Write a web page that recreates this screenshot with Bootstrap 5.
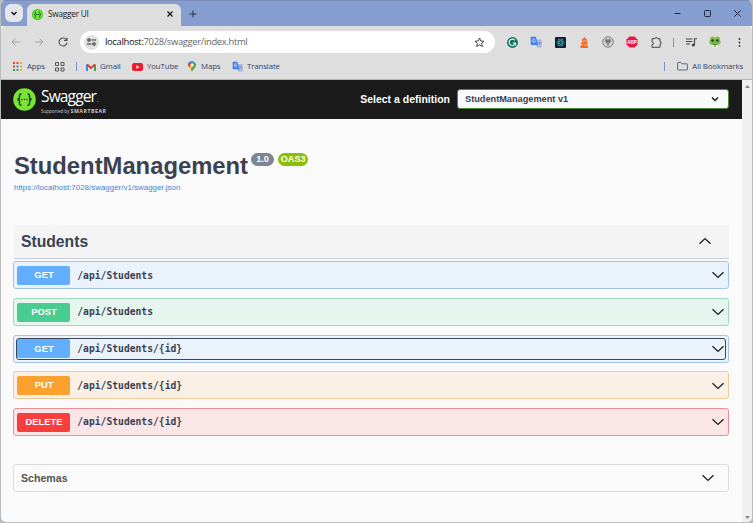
<!DOCTYPE html>
<html lang="en">
<head>
<meta charset="utf-8">
<meta name="viewport" content="width=device-width, initial-scale=1">
<title>Swagger UI</title>
<link href="https://cdn.jsdelivr.net/npm/bootstrap@5.3.0/dist/css/bootstrap.min.css" rel="stylesheet">
<style>
body{width:753px;height:523px;overflow:hidden;background:#b9bbbc;font-family:"Liberation Sans",Arial,sans-serif;line-height:1}
svg{display:block;flex:none;overflow:visible}
.window{height:522px;margin:0 1px;background:#fafafa;border-radius:5px;overflow:hidden}
.ui-text{font-family:"Open Sans","Noto Sans",sans-serif;white-space:nowrap}
.titlebar{height:26px;background:#859ecf;border-top:1px solid #7d8fb9}
.tab-menu{width:18px;height:18px;margin:3px 4px 4px 4px;border-radius:6px;background:#e4e6ea}
.browser-tab{width:154px;height:23px;margin-top:3px;padding:0 8px 3px 5px;border-radius:6px 6px 0 0;background:#dedede;font-size:8.3px;letter-spacing:-.25px;color:#222}
.tab-name{margin-left:5px}
.new-tab{padding-left:8px}
.caption{width:30px}
.toolbar{height:31px;padding:1px 0 0 2px;background:#dedede;border-radius:4px 4px 0 0}
.slot{width:24px;display:flex;justify-content:center;flex:none}
.address{width:415px;height:22px;border-radius:11px;background:#fff;padding:0 10px 0 4px;font-size:9.4px;letter-spacing:-.32px;color:#666;margin:0 5px 0 5px;flex:none}
.address b{font-weight:400;color:#111}
.url{margin-left:6px}
.site{width:15px;height:15px;border-radius:50%;background:#e1e1e1;flex:none}
.rule{width:1px;height:9px;background:#7b93c5;flex:none}
.side-gap{margin:0 5px}
.bookmarks{height:23px;background:#dedede;border-bottom:1px solid #b5b5b5;font-size:7.8px;letter-spacing:-.1px;color:#34416b;padding:0 9px 3px 12px}
.bm{display:flex;align-items:center;flex:none}
.bm-apps{width:42px;gap:5px}
.bm-grid{width:21px}
.bm-gmail{width:46px;gap:4px;margin-left:9px}
.bm-yt{width:56px;gap:4px}
.bm-maps{width:44px;gap:5px}
.page{width:741px}
.topbar{height:39px;background:#1b1b1b;color:#fff;padding:0 13px 1px 12px}
.logo-words{padding:4px 0 0 1px}
.brand{font-size:15.6px;letter-spacing:-.9px;line-height:15px}
.brand i{font-size:6px;letter-spacing:0;font-style:normal;margin-left:1px}
.support{font-size:4.6px;line-height:5px;color:#ccc;letter-spacing:-.05px;margin-top:1px}
.support b{font-size:5.2px;letter-spacing:.55px}
.def-label{font-size:10.5px;margin-right:7px}
.def-select{width:272px;height:20px;border:1px solid #4f8a32;border-radius:3px;background:#f7f9fb;color:#3b4151;font-size:9.2px;padding:0 9px 0 7px;line-height:12px}
.main{padding:0 13px 0 12px}
.info{padding:33px 0 0 1px;height:106px}
.info h1{font-size:23.8px;line-height:28px;color:#3b4151;margin:0 3px 0 0}
.ver{height:13px;border-radius:7px;background:#7d8492;color:#fff;font-size:9.1px;margin-top:1px;padding:0 5.2px}
.ver.oas{background:#89bf04;margin-left:4px;padding:0 2.7px}
.spec{font-size:7.95px;line-height:9px;color:#4685d5;text-decoration:none;margin-top:3px}
.tag-head{height:34px;background:#f4f4f4;border-bottom:1px solid #c9ced9;padding:0 17px 0 7px;margin:0 0 2.200px 1px;color:#3b4151;font-size:15.7px}
.tag-head svg{margin-bottom:1px}
.op{height:28px;margin-bottom:8.7px;border:1px solid var(--c);border-radius:3px;background:var(--bg);padding:3.300px 3px 0 3px}
.op-in{height:20px;border-radius:2px}
.op.focused .op-in{outline:1px solid #3b4658}
.verb{width:53px;height:19px;border-radius:2px;background:var(--m);color:#fff;font-size:9.4px;padding:0 0 1px 1px}
.route{font-family:"DejaVu Sans Mono",monospace;font-size:9.68px;margin-left:7.3px;color:#3b4151}
.get{--c:#a3c4e9;--bg:#eaf2fc;--m:#61affe}
.post{--c:#9fd9bd;--bg:#e6f6ee;--m:#49cc90}
.put{--c:#efca97;--bg:#fbf0e5;--m:#fca130}
.delete{--c:#ec8f98;--bg:#fae6e7;--m:#f93e3e}
.schemas{height:28px;margin:28.500px 0 0 0;border:1px solid #dcdcdc;border-radius:3px;padding:0 13px 0 7px;font-size:10.6px;color:#555}
.scroll{width:10px;background:#f0f0f0;padding:5px 0 3px}
</style>
<script src="https://cdn.jsdelivr.net/npm/bootstrap@5.3.0/dist/js/bootstrap.bundle.min.js"></script>
</head>
<body>
<svg width="0" height="0" class="position-absolute"><defs>
<symbol id="down" viewBox="0 0 14 10"><path d="M1.500 2.200 7 7.400l5.500-5.200" fill="none" stroke="#222" stroke-width="1.400"/></symbol>
<symbol id="translate" viewBox="0 0 12 12"><path d="M6 4h4.500q.7 0 .7.700v5.600q0 .7-.7.700H7.200z" fill="#b9c6e6" stroke="#7892c7" stroke-width=".6"/><path d="M1.500.7h4.300l2.400 8.300H1.500q-.8 0-.8-.8V1.500q0-.8.8-.8z" fill="#3f7ff0"/><path d="M5.200 3.700A1.500 1.500 0 1 0 5.300 5.300H4.200" fill="none" stroke="#fff" stroke-width=".75"/><path d="M7.500 6.300h3M8.300 9.200q1.500-1 1.700-2.800" fill="none" stroke="#5375b8" stroke-width=".7"/></symbol>
</defs></svg>
<div class="window d-flex flex-column">
  <div class="titlebar d-flex flex-shrink-0">
    <div class="tab-menu d-flex align-items-center justify-content-center"><svg width="6" height="5"><path d="M.5 1 3 3.500 5.500 1" fill="none" stroke="#111" stroke-width="1.400"/></svg></div>
    <div class="browser-tab ui-text d-flex align-items-center">
      <svg width="11" height="11" viewBox="0 0 11 11"><circle cx="5.500" cy="5.500" r="5.500" fill="#3ec52b"/><circle cx="5.500" cy="5.500" r="4.600" fill="#6ee83d"/><path d="M4.200 2.500Q3 2.500 3.200 4t-1 1.500q1.200 0 1 1.500t1 1.500M6.800 2.500Q8 2.500 7.800 4t1 1.500q-1.200 0-1 1.500t-1 1.500M4 5.500h3" fill="none" stroke="#185a18" stroke-width=".9"/></svg>
      <span class="tab-name flex-grow-1">Swagger UI</span>
      <svg width="6" height="6"><path d="m.5.5 5 5m0-5-5 5" stroke="#111" stroke-width="1.200"/></svg>
    </div>
    <div class="new-tab d-flex align-items-center flex-grow-1"><svg width="8" height="8"><path d="M4 .5v7M.5 4h7" stroke="#26334f"/></svg></div>
    <div class="caption d-flex align-items-center justify-content-center"><svg width="7" height="7"><path d="M.5 3.500h6" stroke="#1d2740"/></svg></div>
    <div class="caption d-flex align-items-center justify-content-center"><svg width="7" height="7"><rect x=".5" y=".5" width="6" height="6" rx="1" fill="none" stroke="#1d2740"/></svg></div>
    <div class="caption d-flex align-items-center justify-content-center"><svg width="7" height="7"><path d="m.3.3 6.400 6.400m0-6.400L.3 6.700" stroke="#1d2740"/></svg></div>
  </div>
  <div class="toolbar d-flex align-items-center flex-shrink-0">
    <div class="slot"><svg width="9" height="8" viewBox="0 0 9 8"><path d="M9 4H1m3.500-3.500L1 4l3.500 3.500" fill="none" stroke="#a2a2a2"/></svg></div>
    <div class="slot"><svg width="9" height="8" viewBox="0 0 9 8"><path d="M0 4h8M4.500.5 8 4 4.500 7.500" fill="none" stroke="#a2a2a2"/></svg></div>
    <div class="slot"><svg width="10" height="10" viewBox="0 0 10 10"><path d="M8.500 3A4 4 0 1 0 9 5.600M9 .7V3.500H6" fill="none" stroke="#4d4d4d" stroke-width="1.100"/></svg></div>
    <div class="address ui-text d-flex align-items-center">
      <div class="site d-flex align-items-center justify-content-center"><svg width="9" height="8" viewBox="0 0 9 8"><g fill="none" stroke="#333" stroke-width="1.100"><circle cx="2" cy="2" r="1.200"/><path d="M4.500 2H9M0 6h4.500"/><circle cx="7" cy="6" r="1.200"/></g></svg></div>
      <span class="flex-grow-1 url"><b>localhost:</b>7028/swagger/index.html</span>
      <svg width="11" height="11" viewBox="0 0 11 11"><path d="m5.500 1 1.300 3 3.200.3-2.400 2.100.7 3.100-2.800-1.700-2.800 1.700.7-3.100L1 4.300 4.200 4z" fill="none" stroke="#444"/></svg>
    </div>
    <div class="slot"><svg width="11" height="11" viewBox="0 0 11 11"><circle cx="5.500" cy="5.500" r="5.400" fill="#08745b"/><path d="M7.800 3.300A3.200 3.200 0 1 0 8.500 6H5.700M8.500 5.500v3" fill="none" stroke="#fff" stroke-width="1.100"/></svg></div>
    <div class="slot"><svg width="12" height="12"><use href="#translate"/></svg></div>
    <div class="slot"><svg width="11" height="11" viewBox="0 0 11 11"><rect width="11" height="11" rx="1" fill="#10202b"/><g fill="none" stroke="#42a9bd" stroke-width=".7"><ellipse cx="5.500" cy="5.500" rx="4" ry="1.500"/><ellipse cx="5.500" cy="5.500" rx="4" ry="1.500" transform="rotate(60 5.500 5.500)"/><ellipse cx="5.500" cy="5.500" rx="4" ry="1.500" transform="rotate(120 5.500 5.500)"/></g></svg></div>
    <div class="slot"><svg width="9" height="11" viewBox="0 0 9 11"><path d="M4.500 0 1.500 3 3 4.500.7 6.200 2.200 7.800.5 9v2h7.500V9L6.500 7.500 8 6 6.500 4.500 7.300 3z" fill="#f26a24"/><path d="M3 4.300 6 3.500M2.500 7l4 1.500" stroke="#fbd3bb" stroke-width=".7"/></svg></div>
    <div class="slot"><svg width="12" height="12" viewBox="0 0 12 12"><circle cx="6" cy="6" r="5.300" fill="#d2d2d2" stroke="#777" stroke-width=".9"/><path d="M6 10V6M3.300 3.500 5 7.500M8.700 3.500 7 7.500M4.500 2.500 6 6l1.500-3.500M3 5h6" fill="none" stroke="#666" stroke-width="1"/></svg></div>
    <div class="slot"><svg width="12" height="12" viewBox="0 0 12 12"><path d="M3.500.5h5l3 3v5l-3 3h-5l-3-3v-5z" fill="#e8173f"/><text x="6" y="7.600" font-size="4.600" font-weight="700" fill="#fff" text-anchor="middle">ABP</text></svg></div>
    <div class="slot"><svg width="11" height="11" viewBox="0 0 11 11"><path d="M1 1.700h3a1.200 1.200 0 0 1 2.400 0H9v3a1.200 1.200 0 0 1 0 2.400V10.300H1V7.600a1.400 1.400 0 0 0 0-2.800z" fill="none" stroke="#444" stroke-width="1"/></svg></div>
    <div class="rule side-gap"></div>
    <div class="slot"><svg width="11" height="9" viewBox="0 0 11 9"><path d="M0 1h6.500M0 3.500h6.500M0 6h4M8.500 7V.8H11" fill="none" stroke="#444" stroke-width="1.100"/><circle cx="7.300" cy="7" r="1.500" fill="#444"/></svg></div>
    <div class="slot"><svg width="12" height="12" viewBox="0 0 12 12"><ellipse cx="6" cy="6" rx="5.700" ry="4" fill="#7dbb4a"/><circle cx="3.500" cy="3" r="2.400" fill="#7dbb4a"/><circle cx="8.500" cy="3" r="2.400" fill="#7dbb4a"/><circle cx="3.600" cy="4.500" r="1.300" fill="#24441f"/><circle cx="8.400" cy="4.500" r="1.300" fill="#24441f"/><path d="M2.500 8h7l-1 3.500h-5z" fill="#e9eee0"/><path d="M3 8q3 1.500 6 0M6 8v3" stroke="#458032" stroke-width=".9" fill="none"/></svg></div>
    <div class="slot"><svg width="3" height="9"><circle cx="1.500" cy="1" r=".9" fill="#333"/><circle cx="1.500" cy="4.500" r=".9" fill="#333"/><circle cx="1.500" cy="8" r=".9" fill="#333"/></svg></div>
  </div>
  <div class="bookmarks ui-text d-flex align-items-center flex-shrink-0">
    <div class="bm bm-apps"><svg width="9" height="9" viewBox="0 0 9 9"><path d="M0 1h2M0 4.500h2M3.500 1h2" stroke="#e34332" stroke-width="2"/><path d="M7 1h2M7 4.500h2M7 8h2" stroke="#edb52f" stroke-width="2"/><path d="M3.500 4.500h2" stroke="#4384e8" stroke-width="2"/><path d="M0 8h2M3.500 8h2" stroke="#37a350" stroke-width="2"/></svg>Apps</div>
    <div class="bm bm-grid"><svg width="10" height="10" viewBox="0 0 10 10"><path d="M.5.5h3v3h-3zM6 .5h3v3H6zM.5 6h3v3h-3zM6 6h3v3H6z" fill="none" stroke="#555"/></svg></div>
    <div class="rule"></div>
    <div class="bm bm-gmail"><svg width="10" height="8" viewBox="0 0 10 8"><path d="M1 8V1.500" stroke="#4285f4" stroke-width="2"/><path d="M9 8V1.500" stroke="#34a853" stroke-width="2"/><path d="M1 1.500 5 5l4-3.500" fill="none" stroke="#e33b2e" stroke-width="2"/></svg>Gmail</div>
    <div class="bm bm-yt"><svg width="11" height="8" viewBox="0 0 11 8"><rect width="11" height="8" rx="2" fill="#ef1b2d"/><path d="m4.300 2.200 3.200 1.800-3.200 1.800z" fill="#fff"/></svg>YouTube</div>
    <div class="bm bm-maps"><svg width="8" height="11" viewBox="0 0 8 11"><path d="M4 11Q3.700 8 1 5.800L6.500 1Q8 2.300 8 4 8 5.500 6.500 7 4.500 9 4 11z" fill="#34a853"/><path d="M.5 5.500Q-.8 2.500 1.300 1 3.500-.8 6.300.8L4 4z" fill="#4285f4"/><path d="M0 4Q0 2 1.300 1l2.200 2-3 2.700z" fill="#e94335"/><path d="m1 6.200 4-4.500 1 2.800-3.200 3.800z" fill="#fbbc04"/><circle cx="4" cy="4" r="1.400" fill="#fff"/></svg>Maps</div>
    <div class="bm flex-grow-1 gap-1"><svg width="11" height="11"><use href="#translate"/></svg>Translate</div>
    <div class="rule me-2"></div>
    <div class="bm ps-1 gap-1"><svg width="11" height="9" viewBox="0 0 11 9"><path d="M.6 1q0-.5.5-.5h2.800l1.200 1.300h4.800q.5 0 .5.500v5.200q0 .5-.5.500H1.100q-.5 0-.5-.5z" fill="none" stroke="#5d6887"/></svg>All Bookmarks</div>
  </div>
  <div class="d-flex flex-grow-1">
    <div class="page">
      <header class="topbar d-flex align-items-center">
        <svg width="23" height="23" viewBox="0 0 23 23"><circle cx="11.500" cy="11.500" r="11.300" fill="#7be331"/><path d="M8.500 6Q6.200 5.800 6.500 8.500T4.300 11.500q2.500 0 2.200 3t2 2.700M14.500 6q2.300-.2 2 2.500t2.200 3q-2.500 0-2.200 3t-2 2.700" fill="none" stroke="#173647" stroke-width="1.400"/><circle cx="8.800" cy="11.500" r=".8" fill="#173647"/><circle cx="11.500" cy="11.500" r=".8" fill="#173647"/><circle cx="14.200" cy="11.500" r=".8" fill="#173647"/></svg>
        <div class="flex-grow-1 ms-1 ui-text logo-words">
          <div class="brand">Swagger<i>.</i></div>
          <div class="support">Supported by <b>SMARTBEAR</b></div>
        </div>
        <label class="def-label fw-bold">Select a definition</label>
        <div class="def-select fw-bold d-flex align-items-center justify-content-between">StudentManagement v1<svg width="8" height="6"><path d="m1 1.500 3 3 3-3" fill="none" stroke="#111" stroke-width="1.400"/></svg></div>
      </header>
      <main class="main">
        <section class="info">
          <div class="d-flex align-items-start"><h1 class="fw-bold">StudentManagement</h1><span class="ver fw-bold d-flex align-items-center">1.0</span><span class="ver oas fw-bold d-flex align-items-center">OAS3</span></div>
          <a class="spec d-block" href="#">https://localhost:7028/swagger/v1/swagger.json</a>
        </section>
        <div class="tag-head fw-bold d-flex align-items-center justify-content-between">Students<svg width="14" height="10" viewBox="0 0 14 10"><path d="M1.500 7.800 7 2.600l5.500 5.200" fill="none" stroke="#222" stroke-width="1.400"/></svg></div>
        <div class="op get"><div class="op-in d-flex align-items-center"><span class="verb fw-bold d-flex align-items-center justify-content-center">GET</span><span class="route fw-bold flex-grow-1">/api/Students</span><svg width="14" height="10"><use href="#down"/></svg></div></div>
        <div class="op post"><div class="op-in d-flex align-items-center"><span class="verb fw-bold d-flex align-items-center justify-content-center">POST</span><span class="route fw-bold flex-grow-1">/api/Students</span><svg width="14" height="10"><use href="#down"/></svg></div></div>
        <div class="op get focused"><div class="op-in d-flex align-items-center"><span class="verb fw-bold d-flex align-items-center justify-content-center">GET</span><span class="route fw-bold flex-grow-1">/api/Students/{id}</span><svg width="14" height="10"><use href="#down"/></svg></div></div>
        <div class="op put"><div class="op-in d-flex align-items-center"><span class="verb fw-bold d-flex align-items-center justify-content-center">PUT</span><span class="route fw-bold flex-grow-1">/api/Students/{id}</span><svg width="14" height="10"><use href="#down"/></svg></div></div>
        <div class="op delete"><div class="op-in d-flex align-items-center"><span class="verb fw-bold d-flex align-items-center justify-content-center">DELETE</span><span class="route fw-bold flex-grow-1">/api/Students/{id}</span><svg width="14" height="10"><use href="#down"/></svg></div></div>
        <div class="schemas fw-bold d-flex align-items-center justify-content-between">Schemas<svg width="14" height="10"><use href="#down"/></svg></div>
      </main>
    </div>
    <div class="scroll d-flex flex-column align-items-center justify-content-between"><svg width="5" height="3"><path d="M0 3 2.500 0 5 3z" fill="#888"/></svg><svg width="5" height="3"><path d="m0 0 2.500 3L5 0z" fill="#888"/></svg></div>
  </div>
</div>
</body>
</html>
